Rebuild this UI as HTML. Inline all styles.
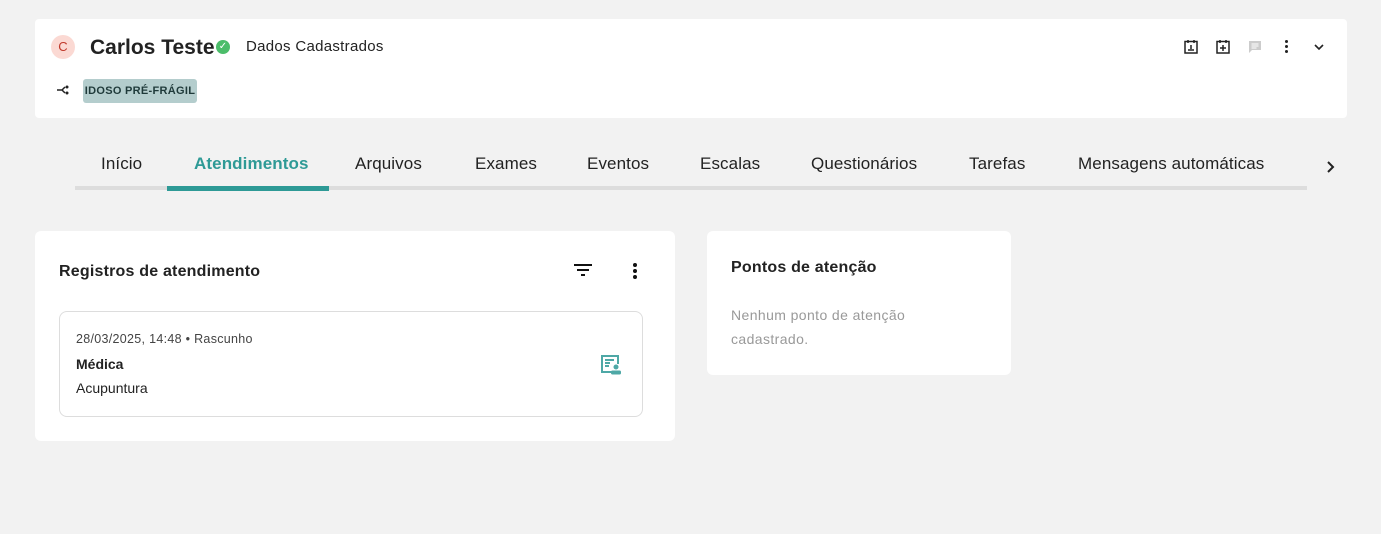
<!DOCTYPE html>
<html><head><meta charset="utf-8"><style>
*{box-sizing:border-box;margin:0;padding:0}
body{width:1381px;height:534px;background:#f2f2f2;font-family:"Liberation Sans",sans-serif;color:#222;position:relative;overflow:hidden}
.abs{position:absolute}
.card{position:absolute;background:#fff;border-radius:6px}
.tab{position:absolute;top:154px;font-size:17px;color:#222;letter-spacing:.1px}
</style></head><body>
<div class="card" style="left:35px;top:19px;width:1312px;height:99px;border-radius:4px">
  <div class="abs" style="left:16px;top:16px;width:24px;height:24px;border-radius:50%;background:#fbd9d3;color:#c0392b;font-size:13px;text-align:center;line-height:24px">C</div>
  <div class="abs" style="left:55px;top:17px;font-size:21px;font-weight:bold;color:#222">Carlos Teste</div>
  <div class="abs" style="left:181px;top:21px;width:14px;height:14px;border-radius:50%;background:#4cbd6a;color:#fff;font-size:10px;text-align:center;line-height:14px">✓</div>
  <div class="abs" style="left:211px;top:19px;font-size:15px;color:#222;letter-spacing:.3px">Dados Cadastrados</div>
  <svg class="abs" style="left:21px;top:64px" width="14" height="14" viewBox="0 0 14 14"><path d="M1 7h5l3-3M6 7l3 3" stroke="#222" stroke-width="1.5" fill="none"/><circle cx="11" cy="4" r="1.5" fill="#222"/><circle cx="11" cy="10" r="1.5" fill="#222"/></svg>
  <div class="abs" style="left:48px;top:60px;width:114px;height:24px;background:#b4cdcd;border-radius:3px;font-size:11px;font-weight:bold;color:#1f3a3a;text-align:center;line-height:24px;letter-spacing:.3px">IDOSO PRÉ-FRÁGIL</div>
  <svg class="abs" style="left:1149px;top:20px" width="14" height="15" viewBox="0 0 14 15"><rect x="1" y="2.5" width="12" height="11.5" fill="none" stroke="#222" stroke-width="1.5"/><path d="M4 1v3M10 1v3M4 11h6M7 6v4" stroke="#222" stroke-width="1.5"/></svg>
  <svg class="abs" style="left:1181px;top:20px" width="14" height="15" viewBox="0 0 14 15"><rect x="1" y="2.5" width="12" height="11.5" fill="none" stroke="#222" stroke-width="1.5"/><path d="M4 1v3M10 1v3M4 9h6M7 6v6" stroke="#222" stroke-width="1.5"/></svg>
  <svg class="abs" style="left:1213px;top:21px" width="14" height="14" viewBox="0 0 14 14"><path d="M1 1h12v9H4l-3 3z" fill="#ccc"/><path d="M3.5 4h7M3.5 6h7M3.5 8h5" stroke="#fff" stroke-width="1"/></svg>
  <div class="abs" style="left:1250px;top:21px;width:3px;font-size:0"><div style="width:3px;height:3px;background:#222;border-radius:50%;margin-bottom:2px"></div><div style="width:3px;height:3px;background:#222;border-radius:50%;margin-bottom:2px"></div><div style="width:3px;height:3px;background:#222;border-radius:50%"></div></div>
  <svg class="abs" style="left:1279px;top:24px" width="10" height="8" viewBox="0 0 10 8"><path d="M1 2l4 4 4-4" stroke="#222" stroke-width="1.6" fill="none"/></svg>
</div>
<div class="tab" style="left:101px">Início</div>
<div class="tab" style="left:194px;color:#2e9a96;font-weight:bold">Atendimentos</div>
<div class="tab" style="left:355px">Arquivos</div>
<div class="tab" style="left:475px">Exames</div>
<div class="tab" style="left:587px">Eventos</div>
<div class="tab" style="left:700px">Escalas</div>
<div class="tab" style="left:811px">Questionários</div>
<div class="tab" style="left:969px">Tarefas</div>
<div class="tab" style="left:1078px">Mensagens automáticas</div>
<div class="abs" style="left:75px;top:186px;width:1232px;height:4px;background:#ddd"></div>
<div class="abs" style="left:167px;top:186px;width:162px;height:5px;background:#2e9a96"></div>
<svg class="abs" style="left:1325px;top:160px" width="10" height="14" viewBox="0 0 10 14"><path d="M3 2l5 5-5 5" stroke="#222" stroke-width="2" fill="none"/></svg>

<div class="card" style="left:35px;top:231px;width:640px;height:210px">
  <div class="abs" style="left:24px;top:32px;font-size:16px;font-weight:bold;color:#222;letter-spacing:.2px">Registros de atendimento</div>
  <div class="abs" style="left:539px;top:33px;width:18px;height:2px;background:#111"></div>
  <div class="abs" style="left:542px;top:38px;width:12px;height:2px;background:#111"></div>
  <div class="abs" style="left:546px;top:43px;width:4px;height:2px;background:#111"></div>
  <div class="abs" style="left:598px;top:32px"><div style="width:4px;height:4px;background:#111;border-radius:50%;margin-bottom:2px"></div><div style="width:4px;height:4px;background:#111;border-radius:50%;margin-bottom:2px"></div><div style="width:4px;height:4px;background:#111;border-radius:50%"></div></div>
  <div class="abs" style="left:24px;top:80px;width:584px;height:106px;border:1px solid #ddd;border-radius:8px">
    <div class="abs" style="left:16px;top:20px;font-size:12.5px;color:#444;letter-spacing:.3px">28/03/2025, 14:48 • Rascunho</div>
    <div class="abs" style="left:16px;top:44px;font-size:14px;font-weight:bold;color:#222">Médica</div>
    <div class="abs" style="left:16px;top:68px;font-size:14px;color:#222">Acupuntura</div>
    <svg class="abs" style="left:540px;top:42px" width="22" height="22" viewBox="0 0 22 22"><path d="M13 18H2V2h16v8" stroke="#4ea8a6" stroke-width="2" fill="none"/><path d="M5 6h9M5 9h5M5 12h4" stroke="#4ea8a6" stroke-width="2"/><circle cx="16" cy="13" r="2.5" fill="#4ea8a6"/><rect x="11" y="16.5" width="10" height="4" rx="1.5" fill="#4ea8a6"/></svg>
  </div>
</div>
<div class="card" style="left:707px;top:231px;width:304px;height:144px">
  <div class="abs" style="left:24px;top:28px;font-size:16px;font-weight:bold;color:#222;letter-spacing:.2px">Pontos de atenção</div>
  <div class="abs" style="left:24px;top:72px;width:230px;font-size:14px;color:#999;line-height:24px;letter-spacing:.4px">Nenhum ponto de atenção cadastrado.</div>
</div>
</body></html>
